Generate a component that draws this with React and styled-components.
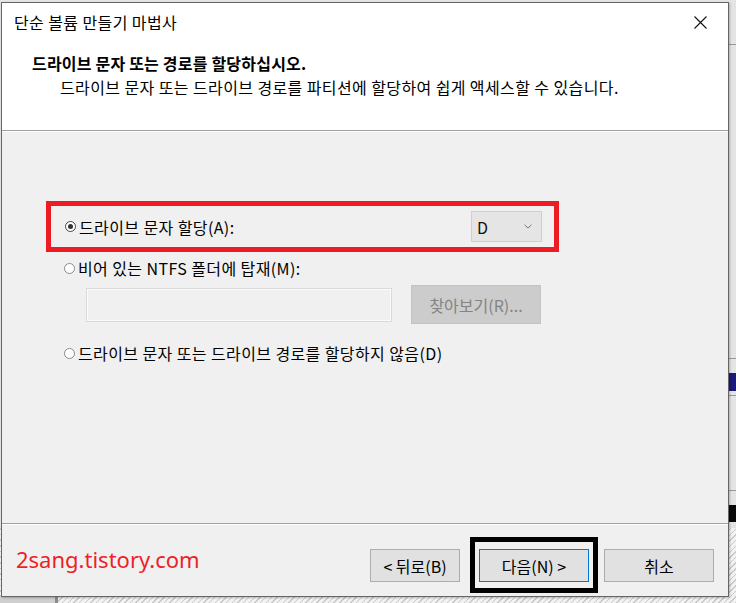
import React from 'react';
import styled, { createGlobalStyle } from 'styled-components';

const GlobalStyle = createGlobalStyle`
  html, body {
    margin: 0;
    padding: 0;
  }
  body {
    font-family: 'Noto Sans CJK KR', 'Noto Sans', sans-serif;
    color: #000;
  }
`;

const FONT = `'Noto Sans CJK KR', 'Noto Sans', sans-serif`;

// desktop behind the dialog: gray windows, a hatched strip at the bottom
const Screen = styled.div`
  width: 736px;
  height: 603px;
  overflow: hidden;
  box-sizing: border-box;
  padding: 2px 0 0 1px;
  display: flex;
  align-items: flex-start;
  background:
    linear-gradient(#0a0a0a, #0a0a0a) right 0 top 505px / 7px 17px no-repeat,
    linear-gradient(#1a1a7a, #1a1a7a) right 0 top 373px / 7px 18px no-repeat,
    linear-gradient(#9a9a9a, #9a9a9a) right 0 top 358px / 7px 1px no-repeat,
    linear-gradient(#9a9a9a, #9a9a9a) right 0 top 395px / 7px 1px no-repeat,
    linear-gradient(#9a9a9a, #9a9a9a) right 0 top 490px / 7px 1px no-repeat,
    linear-gradient(#9a9a9a, #9a9a9a) right 0 top 44px / 7px 1px no-repeat,
    linear-gradient(#8c8c8c, #8c8c8c) 55px bottom / 3px 8px no-repeat,
    linear-gradient(#cfcfcf, #cfcfcf) left bottom / 55px 8px no-repeat,
    linear-gradient(#e4e4e4, #e4e4e4) left top / 100% 528px no-repeat,
    repeating-linear-gradient(-45deg, #c9c9c9 0 1px, #f2f2f2 1px 4px);
`;

const Dialog = styled.div`
  width: 728px;
  height: 595px;
  box-sizing: border-box;
  border: 1px solid #666;
  background: #f0f0f0;
  display: flex;
  flex-direction: column;
  box-shadow: 1px 1px 2px rgba(0, 0, 0, 0.25);
  font-family: ${FONT};
  font-size: 16px;
  letter-spacing: 0.4px;
`;

const TitleBar = styled.div`
  height: 38px;
  flex: none;
  display: flex;
  align-items: center;
  justify-content: space-between;
  padding: 0 8px 0 12px;
  background: #fff;
`;

const CloseButton = styled.div`
  width: 40px;
  height: 30px;
  display: flex;
  align-items: center;
  justify-content: center;
`;

const Header = styled.div`
  height: 90px;
  flex: none;
  box-sizing: border-box;
  padding: 11px 0 0 30px;
  background: #fff;
  border-bottom: 1px solid #a0a0a0;
  box-shadow: 0 1px 0 #fff;
`;

const Heading = styled.div`
  font-weight: 700;
  line-height: 22px;
  letter-spacing: 0.2px;
`;

const SubText = styled.div`
  line-height: 22px;
  padding-left: 28px;
  margin-top: 2px;
`;

const Body = styled.div`
  flex: 1;
  box-sizing: border-box;
  padding: 70px 0 0 44px;
  border-bottom: 1px solid #a0a0a0;
`;

const Highlight = styled.div`
  width: 513px;
  height: 51px;
  box-sizing: border-box;
  border: 5px solid #ed1c24;
  display: flex;
  align-items: center;
  justify-content: space-between;
  padding: 0 12px 0 14px;
`;

const Option = styled.label`
  display: flex;
  align-items: center;
  gap: 3px;
  line-height: 22px;
  margin: ${p => p.$margin || '0'};
`;

const Radio = styled.span`
  width: 11px;
  height: 11px;
  box-sizing: border-box;
  border-radius: 50%;
  border: 1px solid ${p => (p.$checked ? '#444' : '#8a8a8a')};
  background: #fff;
  display: flex;
  align-items: center;
  justify-content: center;

  &::after {
    content: '';
    width: 5px;
    height: 5px;
    border-radius: 50%;
    background: ${p => (p.$checked ? '#333' : 'transparent')};
  }
`;

const Combo = styled.div`
  width: 71px;
  height: 31px;
  box-sizing: border-box;
  border: 1px solid #cfcfcf;
  background: #e5e5e5;
  display: flex;
  align-items: center;
  justify-content: space-between;
  padding: 0 9px 0 5px;
  color: #111;
`;

const PathRow = styled.div`
  display: flex;
  align-items: center;
  gap: 19px;
  margin: 6px 0 0 40px;
`;

const PathField = styled.div`
  width: 306px;
  height: 34px;
  box-sizing: border-box;
  border: 1px solid #dadada;
  box-shadow: inset 0 0 0 1px #fbfbfb;
  background: #f0f0f0;
`;

const BrowseButton = styled.div`
  width: 130px;
  height: 39px;
  box-sizing: border-box;
  background: #cccccc;
  border: 1px solid #c4c4c4;
  color: #838383;
  display: flex;
  align-items: center;
  justify-content: center;
  letter-spacing: 0;
`;

const Footer = styled.div`
  height: 72px;
  flex: none;
  box-sizing: border-box;
  border-top: 1px solid #fff;
  display: flex;
  align-items: flex-start;
  padding: 0 14px;
`;

const Watermark = styled.div`
  font-family: 'Noto Sans', sans-serif;
  font-size: 22px;
  letter-spacing: 0;
  color: #ee1f27;
  margin-top: 19px;
  flex: 1;
`;

const Button = styled.div`
  width: ${p => p.$w}px;
  height: 33px;
  box-sizing: border-box;
  background: #e1e1e1;
  border: 1px solid ${p => (p.$default ? '#0078d7' : '#adadad')};
  box-shadow: ${p => (p.$default ? 'inset 0 0 0 1px #e1e1e1' : 'none')};
  display: flex;
  align-items: center;
  justify-content: center;
  letter-spacing: 0;
  margin-top: ${p => p.$top ?? 24}px;
`;

const FocusBox = styled.div`
  width: 128px;
  height: 56px;
  box-sizing: border-box;
  border: 5px solid #000;
  margin: 12px 6px 0 10px;
  padding: 7px 0 0 4px;
`;

const CloseIcon = () => (
  <svg width="13" height="13" viewBox="0 0 13 13">
    <path d="M0.5 0.5 L12.5 12.5 M12.5 0.5 L0.5 12.5" stroke="#111" strokeWidth="1.1" />
  </svg>
);

const Chevron = () => (
  <svg width="8" height="5" viewBox="0 0 8 5">
    <path d="M0.5 0.8 L4 4 L7.5 0.8" stroke="#777" strokeWidth="1" fill="none" />
  </svg>
);

export default function App() {
  return (
    <>
      <GlobalStyle />
      <Screen>
        <Dialog>
          <TitleBar>
            <span>단순 볼륨 만들기 마법사</span>
            <CloseButton>
              <CloseIcon />
            </CloseButton>
          </TitleBar>

          <Header>
            <Heading>드라이브 문자 또는 경로를 할당하십시오.</Heading>
            <SubText>드라이브 문자 또는 드라이브 경로를 파티션에 할당하여 쉽게 액세스할 수 있습니다.</SubText>
          </Header>

          <Body>
            <Highlight>
              <Option>
                <Radio $checked />
                드라이브 문자 할당(A):
              </Option>
              <Combo>
                D
                <Chevron />
              </Combo>
            </Highlight>

            <Option $margin="5px 0 0 18px">
              <Radio />
              비어 있는 NTFS 폴더에 탑재(M):
            </Option>

            <PathRow>
              <PathField />
              <BrowseButton>찾아보기(R)...</BrowseButton>
            </PathRow>

            <Option $margin="18px 0 0 18px">
              <Radio />
              드라이브 문자 또는 드라이브 경로를 할당하지 않음(D)
            </Option>
          </Body>

          <Footer>
            <Watermark>2sang.tistory.com</Watermark>
            <Button $w={90}>&lt; 뒤로(B)</Button>
            <FocusBox>
              <Button $w={110} $default $top={0}>다음(N) &gt;</Button>
            </FocusBox>
            <Button $w={110}>취소</Button>
          </Footer>
        </Dialog>
      </Screen>
    </>
  );
}
